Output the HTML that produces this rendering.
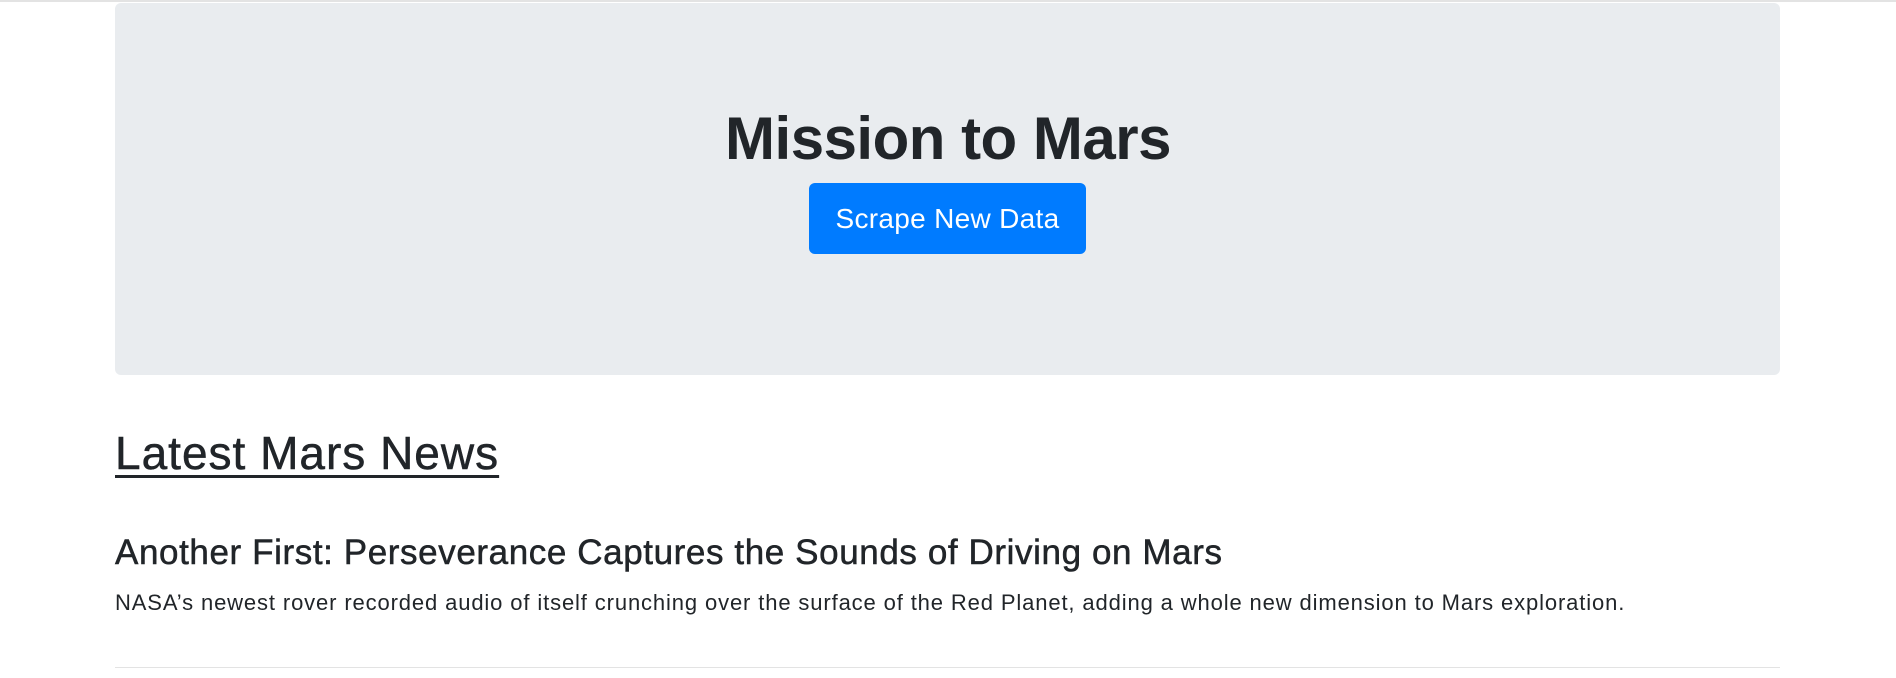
<!DOCTYPE html>
<html><head><style>
html,body{margin:0;padding:0;background:#fff;width:1896px;height:678px;overflow:hidden;font-family:"Liberation Sans",sans-serif;color:#212529}
.topline{position:absolute;left:0;top:0;width:1896px;height:2px;background:#e3e3e3}
.jumbo{position:absolute;left:115px;top:3px;width:1665px;height:372px;background:#e9ecef;border-radius:6px}
h1{position:absolute;left:0;width:100%;top:104px;margin:0;text-align:center;font-size:60px;line-height:70px;font-weight:bold;letter-spacing:-0.5px}
.btn{position:absolute;left:809px;top:183px;width:277px;height:71px;background:#007bff;color:#fff;border-radius:6px;font-size:28px;letter-spacing:0.3px;line-height:71px;text-align:center}
h2{position:absolute;left:115px;top:423px;margin:0;font-size:46px;letter-spacing:1px;line-height:60px;font-weight:normal;text-decoration:underline;text-decoration-thickness:3px;text-underline-offset:6px;-webkit-text-stroke:0.5px #212529}
h3{position:absolute;left:115px;top:530px;margin:0;font-size:35px;line-height:46px;font-weight:normal;letter-spacing:0.6px;-webkit-text-stroke:0.5px #212529}
p{position:absolute;left:115px;top:589px;margin:0;font-size:22px;line-height:28px;letter-spacing:0.87px}
hr{position:absolute;left:115px;top:667px;width:1665px;margin:0;border:0;height:1px;background:#e3e3e3}
</style></head><body>
<div class="topline"></div>
<div class="jumbo"></div>
<h1>Mission to Mars</h1>
<div class="btn">Scrape New Data</div>
<h2>Latest Mars News</h2>
<h3>Another First: Perseverance Captures the Sounds of Driving on Mars</h3>
<p>NASA’s newest rover recorded audio of itself crunching over the surface of the Red Planet, adding a whole new dimension to Mars exploration.</p>
<hr>
</body></html>
